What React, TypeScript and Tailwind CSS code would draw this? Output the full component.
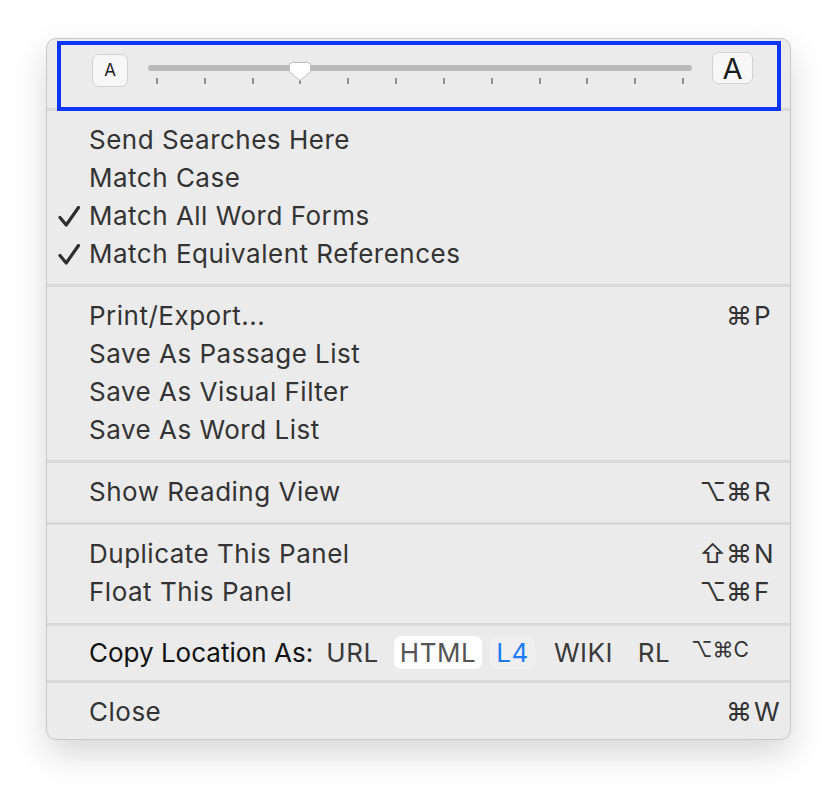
import React from "react";

const font = { fontFamily: "Inter, 'DejaVu Sans', sans-serif" };

function Check() {
  return (
    <svg width="22" height="21" viewBox="0 0 22 21" className="ml-[11px]">
      <path d="M2 11.5 L8.2 19 L20.5 1.5" fill="none" stroke="#2e2e2e" strokeWidth="3.2" strokeLinecap="round" strokeLinejoin="round" />
    </svg>
  );
}

function Shortcut({ mods, k }: { mods: string; k: string }) {
  return (
    <span className="flex items-center tracking-normal">
      <span className="text-right">{mods}</span>
      <span className="w-[38px] pl-[2px]">{k}</span>
    </span>
  );
}

function Item({ label, checked, mods, k }: { label: string; checked?: boolean; mods?: string; k?: string }) {
  return (
    <div className="flex h-[38px] items-center text-[26px] leading-none tracking-[0.5px] text-[#333333]">
      <div className="flex w-[42px] items-center">{checked && <Check />}</div>
      <div className="flex-1">{label}</div>
      {k && <Shortcut mods={mods ?? ""} k={k} />}
    </div>
  );
}

function Sep() {
  return <div className="h-[3px] bg-[#d9d9d9]" />;
}

function Thumb() {
  return (
    <svg width="22" height="19" viewBox="0 0 22 19" className="absolute left-[141px] top-[-3px]">
      <path
        d="M3.5 0.5 H18.5 a3 3 0 0 1 3 3 V10 L11 18.5 L0.5 10 V3.5 a3 3 0 0 1 3 -3 Z"
        fill="#ffffff"
        stroke="#bdbdbd"
        strokeWidth="1"
      />
    </svg>
  );
}

function Pill({ label, w, active, blue, ml }: { label: string; w: string; active?: boolean; blue?: boolean; ml: string }) {
  return (
    <div
      className={`${w} ${ml} flex h-[33px] shrink-0 items-center justify-center rounded-[7px] text-[26px] leading-none tracking-[0.5px] ${
        active ? "bg-white text-[#555555]" : blue ? "bg-[#efefef] text-[#1a7cf4]" : "text-[#3a3a3a]"
      }`}
    >
      {label}
    </div>
  );
}

export default function App() {
  const ticks = Array.from({ length: 12 });
  return (
    <div className="min-h-screen bg-white pl-[46px] pt-[38px]" style={font}>
      <div className="relative w-[745px] rounded-[10px] border border-[#c8c8c8] bg-[#ebebeb] shadow-[0_14px_34px_rgba(0,0,0,0.16)]">
        {/* Text size slider */}
        <div className="flex h-[69px] items-start pl-[45px]">
          <div className="mt-[15px] flex h-[33px] w-[36px] items-center justify-center rounded-[7px] border border-[#d2d2d2] bg-[#f7f7f7] text-[17px] leading-none text-[#222]">
            A
          </div>
          <div className="relative ml-[20px] mt-[26px] h-[24px] w-[544px]">
            <div className="h-[6px] rounded-full bg-[#b9b9b9]" />
            <div className="mt-[7px] flex justify-between px-[8px]">
              {ticks.map((_, i) => (
                <div key={i} className="h-[6px] w-[2px] bg-[#8e8e8e]" />
              ))}
            </div>
            <Thumb />
          </div>
          <div className="ml-[20px] mt-[13px] flex h-[32px] w-[41px] items-center justify-center rounded-[7px] border border-[#d2d2d2] bg-[#f7f7f7] text-[29px] leading-none text-[#1a1a1a]">
            A
          </div>
        </div>
        <div className="pointer-events-none absolute left-[10px] top-[2px] h-[70px] w-[724px] border-4 border-[#0a34ff]" />
        <Sep />

        <div className="pb-[11px] pt-[10px]">
          <Item label="Send Searches Here" />
          <Item label="Match Case" />
          <Item label="Match All Word Forms" checked />
          <Item label="Match Equivalent References" checked />
        </div>
        <Sep />

        <div className="pb-[11px] pt-[10px]">
          <Item label="Print/Export..." mods="⌘" k="P" />
          <Item label="Save As Passage List" />
          <Item label="Save As Visual Filter" />
          <Item label="Save As Word List" />
        </div>
        <Sep />

        <div className="pb-[11px] pt-[10px]">
          <Item label="Show Reading View" mods="⌥⌘" k="R" />
        </div>
        <Sep />

        <div className="pb-[12px] pt-[10px]">
          <Item label="Duplicate This Panel" mods="⇧⌘" k="N" />
          <Item label="Float This Panel" mods="⌥⌘" k="F" />
        </div>
        <Sep />

        <div className="flex h-[54px] items-center pb-[1px]">
          <div className="w-[274px] shrink-0 whitespace-nowrap pl-[42px] text-[26px] leading-none text-[#111111]">
            Copy Location As:
          </div>
          <Pill label="URL" w="w-[63px]" ml="ml-0" />
          <Pill label="HTML" w="w-[88px]" ml="ml-[10px]" active />
          <Pill label="L4" w="w-[45px]" ml="ml-[8px]" blue />
          <Pill label="WIKI" w="w-[71px]" ml="ml-[13px]" />
          <Pill label="RL" w="w-[44px]" ml="ml-[13px]" />
          <div className="mb-[6px] ml-[15px] whitespace-nowrap text-[21px] leading-none text-[#333333]">⌥⌘C</div>
        </div>
        <Sep />

        <div className="pb-[8px] pt-[10px]">
          <Item label="Close" mods="⌘" k="W" />
        </div>
      </div>
    </div>
  );
}
